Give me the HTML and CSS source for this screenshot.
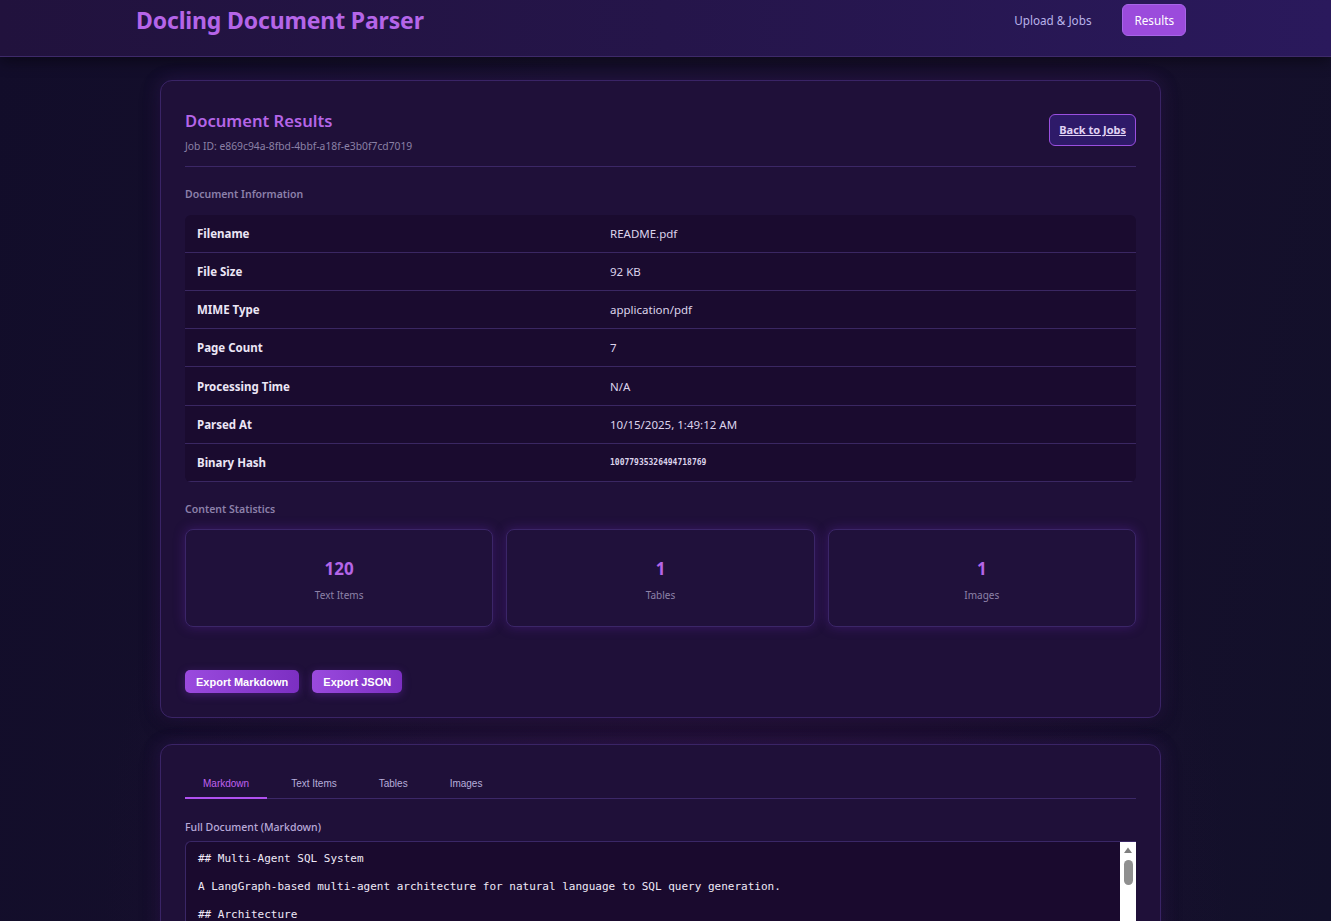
FILE: index.html
```html
<!DOCTYPE html>
<html lang="en">
<head>
<meta charset="utf-8">
<title>Docling Document Parser</title>
<link rel="stylesheet" href="styles.css">
</head>
<body>
<header class="topbar">
  <div class="topbar-inner">
    <h1 class="brand">Docling Document Parser</h1>
    <nav class="nav">
      <a class="nav-link" href="#">Upload &amp; Jobs</a>
      <a class="nav-link active" href="#">Results</a>
    </nav>
  </div>
</header>

<main class="main">
  <section class="card">
    <div class="card-head">
      <div>
        <h2 class="card-title">Document Results</h2>
        <div class="job-id">Job ID: e869c94a-8fbd-4bbf-a18f-e3b0f7cd7019</div>
      </div>
      <a class="btn-outline" href="#">Back to Jobs</a>
    </div>

    <h3 class="section-label">Document Information</h3>
    <div class="info-table">
      <div class="row"><div class="k">Filename</div><div class="v">README.pdf</div></div>
      <div class="row"><div class="k">File Size</div><div class="v">92 KB</div></div>
      <div class="row"><div class="k">MIME Type</div><div class="v">application/pdf</div></div>
      <div class="row"><div class="k">Page Count</div><div class="v">7</div></div>
      <div class="row"><div class="k">Processing Time</div><div class="v">N/A</div></div>
      <div class="row"><div class="k">Parsed At</div><div class="v">10/15/2025, 1:49:12 AM</div></div>
      <div class="row"><div class="k">Binary Hash</div><div class="v mono">10077935326494718769</div></div>
    </div>

    <h3 class="section-label stats-label">Content Statistics</h3>
    <div class="stats">
      <div class="stat"><div class="stat-num">120</div><div class="stat-lbl">Text Items</div></div>
      <div class="stat"><div class="stat-num">1</div><div class="stat-lbl">Tables</div></div>
      <div class="stat"><div class="stat-num">1</div><div class="stat-lbl">Images</div></div>
    </div>

    <div class="actions">
      <button class="btn">Export Markdown</button>
      <button class="btn">Export JSON</button>
    </div>
  </section>

  <section class="card card-tabs">
    <div class="tabs">
      <button class="tab active">Markdown</button>
      <button class="tab">Text Items</button>
      <button class="tab">Tables</button>
      <button class="tab">Images</button>
    </div>
    <div class="doc-label">Full Document (Markdown)</div>
    <div class="code-box">
<pre class="code">## Multi-Agent SQL System

A LangGraph-based multi-agent architecture for natural language to SQL query generation.

## Architecture</pre>
      <div class="scrollbar" aria-hidden="true">
        <svg class="scroll-arrow" width="16" height="16" viewBox="0 0 16 16"><path d="M4 11 L8 5.5 L12 11 Z" fill="#7f7f7f"/></svg>
        <div class="scroll-thumb"></div>
      </div>
    </div>
  </section>
</main>
</body>
</html>
```

FILE: styles.css
```css
* { box-sizing: border-box; }

html, body { margin: 0; padding: 0; }

body {
  font-family: "Noto Sans", "Open Sans", sans-serif;
  color: #e6def5;
  height: 921px;
  background:
    radial-gradient(ellipse at 50% 100%, rgba(60, 20, 80, 0.35), transparent 60%),
    linear-gradient(100deg, #120d2a 0%, #16102c 40%, #170f2c 70%, #12102a 100%);
  overflow: hidden;
}

.topbar {
  height: 57px;
  background: linear-gradient(90deg, #21123d 0%, #25154a 50%, #2a195c 100%);
  border-bottom: 1px solid #3e2a6a;
  box-shadow: 0 4px 14px rgba(0, 0, 0, 0.45);
}

.topbar-inner {
  width: 1050px;
  margin-left: 136px;
  display: flex;
  align-items: flex-start;
  justify-content: space-between;
  padding-top: 4px;
}

.brand {
  margin: 0;
  font-size: 23px;
  line-height: 32px;
  font-weight: 700;
  color: #b565e8;
  letter-spacing: -0.15px;
}

.nav {
  display: flex;
  align-items: center;
  gap: 31px;
}

.nav-link {
  font-size: 11.7px;
  color: #b9b3ea;
  text-decoration: none;
  line-height: 31px;
}

.nav-link.active {
  background: #9b4bdc;
  color: #ffffff;
  border: 1px solid #a865e8;
  border-radius: 6px;
  padding: 0 11px;
  height: 32px;
}

.main {
  width: 1001px;
  margin: 23px 0 0 160px;
  display: flex;
  flex-direction: column;
  gap: 26px;
}

.card {
  background: #1f1039;
  border: 1px solid #3a2466;
  border-radius: 12px;
  padding: 24px;
  box-shadow: 0 0 18px rgba(120, 50, 200, 0.22), 0 6px 20px rgba(0, 0, 0, 0.35);
}

.card-head {
  display: flex;
  justify-content: space-between;
  align-items: flex-start;
  padding: 5px 0 13px;
  border-bottom: 1px solid #3b2766;
}

.card-title {
  margin: 0;
  font-size: 16.6px;
  line-height: 22px;
  font-weight: 600;
  color: #b565e8;
}

.job-id {
  margin-top: 7px;
  font-size: 10.3px;
  color: #8b81a6;
  line-height: 14px;
}

.btn-outline {
  margin-top: 4px;
  display: inline-block;
  padding: 0 9px;
  height: 32px;
  line-height: 30px;
  font-size: 11px;
  font-weight: 700;
  color: #e0d2f4;
  background: #2e1a69;
  border: 1px solid #9a4fe0;
  border-radius: 6px;
  text-decoration: underline;
}

.section-label {
  margin: 20px 0 14px;
  font-size: 10.5px;
  font-weight: 600;
  line-height: 14px;
  color: #8c80aa;
}

.info-table {
  background: #1a0b2f;
  border-radius: 6px;
  overflow: hidden;
}

.row {
  display: grid;
  grid-template-columns: 413px 1fr;
  height: 38px;
  align-items: center;
  border-bottom: 1px solid #3a2762;
  font-size: 11.5px;
}

.row:nth-child(5) { height: 39px; }

.row .k {
  padding-left: 12px;
  font-weight: 700;
  color: #ece6f6;
}

.row .v {
  padding-left: 12px;
  color: #ddd4ec;
}

.row .v.mono {
  font-family: "DejaVu Sans Mono", monospace;
  font-size: 8px;
  font-weight: 700;
}

.stats-label {
  margin-top: 20px;
  margin-bottom: 13px;
}

.stats {
  display: grid;
  grid-template-columns: repeat(3, 1fr);
  gap: 13px;
}

.stat {
  height: 98px;
  border: 1px solid #3b2668;
  border-radius: 8px;
  background: #20113b;
  box-shadow: 0 0 12px rgba(110, 40, 190, 0.35);
  display: flex;
  flex-direction: column;
  align-items: center;
  justify-content: center;
  gap: 8px;
  padding-top: 4px;
}

.stat-num {
  font-size: 17px;
  font-weight: 700;
  line-height: 22px;
  color: #b565e8;
}

.stat-lbl {
  font-size: 10px;
  color: #8d82a8;
  line-height: 14px;
}

.actions {
  display: flex;
  gap: 13px;
  margin-top: 43px;
}

.btn {
  font-family: "Liberation Sans", Arial, sans-serif;
  font-size: 11px;
  font-weight: 700;
  color: #ffffff;
  height: 23px;
  padding: 0 11px;
  border: none;
  border-radius: 5px;
  background: linear-gradient(90deg, #9a4ade 0%, #7c2fc2 100%);
  box-shadow: 0 2px 8px rgba(130, 50, 210, 0.35);
}

.card-tabs {
  padding-top: 27px;
  padding-bottom: 0;
}

.tabs {
  display: flex;
  gap: 6px;
  border-bottom: 1px solid #3c2868;
}

.tab {
  font-family: "Liberation Sans", Arial, sans-serif;
  background: none;
  border: none;
  border-bottom: 2px solid transparent;
  margin-bottom: -1px;
  padding: 6px 18px 8px;
  font-size: 10px;
  color: #b7aedb;
}

.tab.active {
  color: #c062f0;
  border-bottom-color: #b050f0;
}

.doc-label {
  margin: 21px 0 7px;
  font-size: 10.5px;
  font-weight: 500;
  color: #b9aad9;
}

.code-box {
  display: flex;
  height: 120px;
  border: 1px solid #3a2766;
  border-right: none;
  border-bottom: none;
  border-radius: 6px 0 0 0;
  background: #1a0a2e;
  overflow: hidden;
}

.code {
  flex: 1;
  margin: 0;
  padding: 10px 12px 0;
  font-family: "DejaVu Sans Mono", monospace;
  font-size: 11px;
  line-height: 14px;
  color: #efe9f7;
  white-space: pre-wrap;
}

.scrollbar {
  width: 16px;
  flex: 0 0 16px;
  background: #ffffff;
  display: flex;
  flex-direction: column;
  align-items: center;
}

.scroll-arrow {
  display: block;
}

.scroll-thumb {
  margin-top: 2px;
  width: 9px;
  height: 25px;
  border-radius: 5px;
  background: #8f8f8f;
}
```
